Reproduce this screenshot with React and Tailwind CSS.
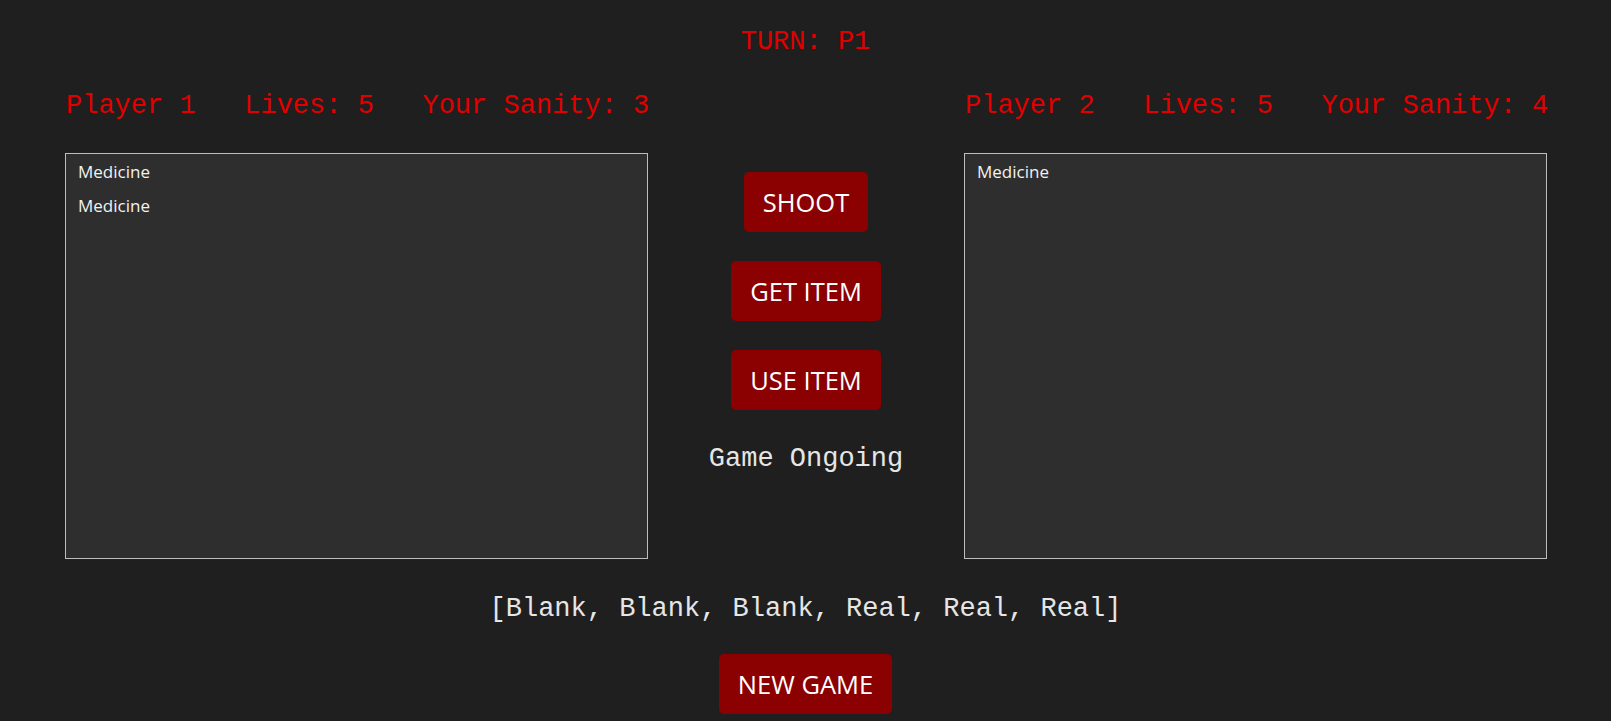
import React from "react";

const mono = { fontFamily: '"Liberation Mono", "Courier New", monospace' };

function Btn({ children }) {
  return (
    <button
      className="bg-[#8b0000] text-white rounded-[5px] h-[60px] px-[19px] text-[25.5px] leading-[34px] font-['Open_Sans',sans-serif]"
    >
      {children}
    </button>
  );
}

function Inventory({ items }) {
  return (
    <div className="w-[583px] h-[406px] border border-[#bdbdbd] bg-[#2e2e2e] pt-[6px] px-[12px] flex flex-col gap-[10px]">
      {items.map((it, i) => (
        <div
          key={i}
          className="text-[17px] leading-[24px] text-[#f2f2f2] font-['Open_Sans',sans-serif]"
        >
          {it}
        </div>
      ))}
    </div>
  );
}

export default function App() {
  return (
    <div className="min-h-screen w-full bg-[#1f1f1f] flex flex-col pt-[27px]">
      <div
        className="text-center text-[27px] leading-[30px] text-[#e00000] whitespace-pre"
        style={mono}
      >
        TURN: P1
      </div>

      <div className="mt-[34px] pl-[65px] pr-[64px] flex justify-between">
        <div
          className="w-[583px] px-[1px] text-[27px] leading-[30px] text-[#e00000] whitespace-pre"
          style={mono}
        >
          {"Player 1   Lives: 5   Your Sanity: 3"}
        </div>
        <div
          className="w-[583px] px-[1px] text-[27px] leading-[30px] text-[#e00000] whitespace-pre"
          style={mono}
        >
          {"Player 2   Lives: 5   Your Sanity: 4"}
        </div>
      </div>

      <div className="mt-[32px] pl-[65px] pr-[64px] flex">
        <Inventory items={["Medicine", "Medicine"]} />
        <div className="flex-1 flex flex-col items-center pt-[19px] gap-[29px]">
          <Btn>SHOOT</Btn>
          <Btn>GET ITEM</Btn>
          <Btn>USE ITEM</Btn>
          <div
            className="mt-[5px] text-[27px] leading-[30px] text-[#e6e6e6] whitespace-pre"
            style={mono}
          >
            Game Ongoing
          </div>
        </div>
        <Inventory items={["Medicine"]} />
      </div>

      <div
        className="mt-[35px] text-center text-[27px] leading-[30px] text-[#e6e6e6] whitespace-pre"
        style={mono}
      >
        [Blank, Blank, Blank, Real, Real, Real]
      </div>

      <div className="mt-[30px] flex justify-center">
        <Btn>NEW GAME</Btn>
      </div>
    </div>
  );
}
